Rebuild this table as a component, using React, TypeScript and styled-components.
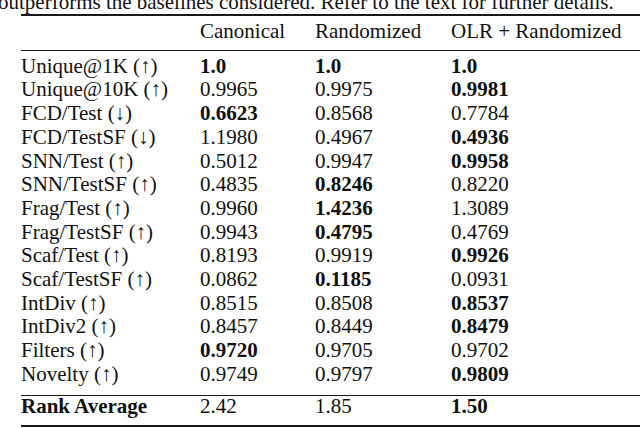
import styled, { createGlobalStyle } from "styled-components";

const GlobalStyle = createGlobalStyle`
  html, body {
    margin: 0;
    padding: 0;
    background: #ffffff;
    overflow: hidden;
  }
  body {
    font-family: "Liberation Serif", "Times New Roman", serif;
    font-size: 21px;
    color: #111111;
  }
`;

const Page = styled.div`
  width: 640px;
  height: 428px;
  overflow: hidden;
`;

const Caption = styled.p`
  margin: -9px 0 0 -2px;
  height: 23px;
  line-height: 23.7px;
  white-space: nowrap;
`;

const Table = styled.div`
  margin-left: 21px;
  width: 640px;
`;

const Rule = styled.div<{ $weight: number }>`
  height: ${(p) => p.$weight}px;
  background: #1a1a1a;
`;

const Section = styled.div<{ $top: number; $bottom: number }>`
  padding: ${(p) => p.$top}px 0 ${(p) => p.$bottom}px;
`;

const Row = styled.div<{ $line?: number }>`
  display: grid;
  grid-template-columns: 179px 115px 136px 1fr;
  line-height: ${(p) => p.$line ?? 23.7}px;
  white-space: nowrap;
`;

const Cell = styled.span<{ $bold?: boolean }>`
  font-weight: ${(p) => (p.$bold ? 700 : 400)};
`;

type Value = [string, boolean];

const rows: { label: string; values: Value[] }[] = [
  { label: "Unique@1K (↑)", values: [["1.0", true], ["1.0", true], ["1.0", true]] },
  { label: "Unique@10K (↑)", values: [["0.9965", false], ["0.9975", false], ["0.9981", true]] },
  { label: "FCD/Test (↓)", values: [["0.6623", true], ["0.8568", false], ["0.7784", false]] },
  { label: "FCD/TestSF (↓)", values: [["1.1980", false], ["0.4967", false], ["0.4936", true]] },
  { label: "SNN/Test (↑)", values: [["0.5012", false], ["0.9947", false], ["0.9958", true]] },
  { label: "SNN/TestSF (↑)", values: [["0.4835", false], ["0.8246", true], ["0.8220", false]] },
  { label: "Frag/Test (↑)", values: [["0.9960", false], ["1.4236", true], ["1.3089", false]] },
  { label: "Frag/TestSF (↑)", values: [["0.9943", false], ["0.4795", true], ["0.4769", false]] },
  { label: "Scaf/Test (↑)", values: [["0.8193", false], ["0.9919", false], ["0.9926", true]] },
  { label: "Scaf/TestSF (↑)", values: [["0.0862", false], ["0.1185", true], ["0.0931", false]] },
  { label: "IntDiv (↑)", values: [["0.8515", false], ["0.8508", false], ["0.8537", true]] },
  { label: "IntDiv2 (↑)", values: [["0.8457", false], ["0.8449", false], ["0.8479", true]] },
  { label: "Filters (↑)", values: [["0.9720", true], ["0.9705", false], ["0.9702", false]] },
  { label: "Novelty (↑)", values: [["0.9749", false], ["0.9797", false], ["0.9809", true]] },
];

function App() {
  return (
    <Page>
      <GlobalStyle />
      <Caption>
        outperforms the baselines considered. Refer to the text for further details.
      </Caption>
      <Table>
        <Rule $weight={2} />
        <Section $top={4} $bottom={6}>
          <Row>
            <Cell />
            <Cell>Canonical</Cell>
            <Cell>Randomized</Cell>
            <Cell>OLR + Randomized</Cell>
          </Row>
        </Section>
        <Rule $weight={1} />
        <Section $top={4} $bottom={8}>
          {rows.map((row) => (
            <Row key={row.label}>
              <Cell>{row.label}</Cell>
              {row.values.map(([v, b], i) => (
                <Cell key={i} $bold={b}>
                  {v}
                </Cell>
              ))}
            </Row>
          ))}
        </Section>
        <Rule $weight={1} />
        <Section $top={0} $bottom={8}>
          <Row $line={21}>
            <Cell $bold>Rank Average</Cell>
            <Cell>2.42</Cell>
            <Cell>1.85</Cell>
            <Cell $bold>1.50</Cell>
          </Row>
        </Section>
        <Rule $weight={2} />
      </Table>
    </Page>
  );
}

export default App;
